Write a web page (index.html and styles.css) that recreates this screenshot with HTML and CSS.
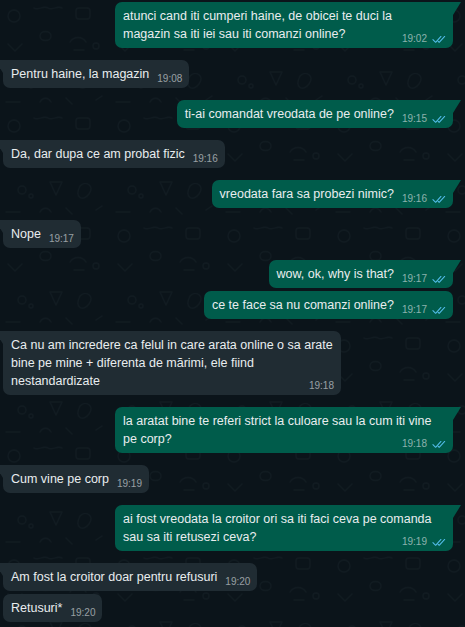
FILE: index.html
```html
<!DOCTYPE html>
<html lang="ro">
<head>
<meta charset="utf-8">
<title>Chat</title>
<link rel="stylesheet" href="styles.css">
</head>
<body>
<div class="chat">
  <div class="row out">
    <div class="bubble wide tail">atunci cand iti cumperi haine, de obicei te duci la<br>magazin sa iti iei sau iti comanzi online?<span class="meta"><span class="time">19:02</span><svg class="ticks" viewBox="0 0 15 9"><path d="M1 4.6 3.9 7.5 9.6 1.2M6.6 6.4 7.7 7.5 13.6 1.2"/></svg></span></div>
  </div>
  <div class="row in">
    <div class="bubble tail">Pentru haine, la magazin<span class="meta"><span class="time">19:08</span></span></div>
  </div>
  <div class="row out">
    <div class="bubble tail">ti-ai comandat vreodata de pe online?<span class="meta"><span class="time">19:15</span><svg class="ticks" viewBox="0 0 15 9"><path d="M1 4.6 3.9 7.5 9.6 1.2M6.6 6.4 7.7 7.5 13.6 1.2"/></svg></span></div>
  </div>
  <div class="row in">
    <div class="bubble tail">Da, dar dupa ce am probat fizic<span class="meta"><span class="time">19:16</span></span></div>
  </div>
  <div class="row out">
    <div class="bubble tail">vreodata fara sa probezi nimic?<span class="meta"><span class="time">19:16</span><svg class="ticks" viewBox="0 0 15 9"><path d="M1 4.6 3.9 7.5 9.6 1.2M6.6 6.4 7.7 7.5 13.6 1.2"/></svg></span></div>
  </div>
  <div class="row in">
    <div class="bubble tail">Nope<span class="meta"><span class="time">19:17</span></span></div>
  </div>
  <div class="row out">
    <div class="bubble tail">wow, ok, why is that?<span class="meta"><span class="time">19:17</span><svg class="ticks" viewBox="0 0 15 9"><path d="M1 4.6 3.9 7.5 9.6 1.2M6.6 6.4 7.7 7.5 13.6 1.2"/></svg></span></div>
  </div>
  <div class="row out cont">
    <div class="bubble">ce te face sa nu comanzi online?<span class="meta"><span class="time">19:17</span><svg class="ticks" viewBox="0 0 15 9"><path d="M1 4.6 3.9 7.5 9.6 1.2M6.6 6.4 7.7 7.5 13.6 1.2"/></svg></span></div>
  </div>
  <div class="row in">
    <div class="bubble wide tail">Ca nu am incredere ca felul in care arata online o sa arate<br>bine pe mine + diferenta de mărimi, ele fiind<br>nestandardizate<span class="meta"><span class="time">19:18</span></span></div>
  </div>
  <div class="row out">
    <div class="bubble wide tail">la aratat bine te referi strict la culoare sau la cum iti vine<br>pe corp?<span class="meta"><span class="time">19:18</span><svg class="ticks" viewBox="0 0 15 9"><path d="M1 4.6 3.9 7.5 9.6 1.2M6.6 6.4 7.7 7.5 13.6 1.2"/></svg></span></div>
  </div>
  <div class="row in">
    <div class="bubble tail">Cum vine pe corp<span class="meta"><span class="time">19:19</span></span></div>
  </div>
  <div class="row out">
    <div class="bubble wide tail">ai fost vreodata la croitor ori sa iti faci ceva pe comanda<br>sau sa iti retusezi ceva?<span class="meta"><span class="time">19:19</span><svg class="ticks" viewBox="0 0 15 9"><path d="M1 4.6 3.9 7.5 9.6 1.2M6.6 6.4 7.7 7.5 13.6 1.2"/></svg></span></div>
  </div>
  <div class="row in">
    <div class="bubble tail">Am fost la croitor doar pentru refusuri<span class="meta"><span class="time">19:20</span></span></div>
  </div>
  <div class="row in cont">
    <div class="bubble">Retusuri*<span class="meta"><span class="time">19:20</span></span></div>
  </div>
</div>
</body>
</html>
```

FILE: styles.css
```css
html, body {
  margin: 0;
  padding: 0;
  height: 100%;
}

body {
  background-color: #0b141a;
  background-image: url("data:image/svg+xml;utf8,<svg xmlns='http://www.w3.org/2000/svg' width='110' height='110' viewBox='0 0 110 110'><g fill='none' stroke='%23111b21' stroke-width='1.3' stroke-linecap='round' stroke-linejoin='round'><circle cx='14' cy='16' r='6'/><path d='M34 8c5 3 9-3 14 0s9-3 14 0'/><rect x='76' y='8' width='14' height='11' rx='3'/><path d='M8 44l7 7 7-7'/><path d='M40 36c0 6 11 6 11 0s-11-6-11 0z'/><path d='M70 42c4-6 12-6 16 0M74 50h10'/><circle cx='96' cy='46' r='3'/><circle cx='22' cy='80' r='4'/><circle cx='31' cy='86' r='2'/><path d='M50 72l6 13 6-13z'/><path d='M80 76c6-6 15 0 9 8s-15 4-9-8'/><path d='M6 102h14M40 102c3-5 8-5 11 0'/><path d='M66 98l6 6M96 100l6-4'/></g></svg>");
  font-family: "Liberation Sans", Arial, sans-serif;
  color: #e9edef;
  overflow: hidden;
}

.chat {
  display: flex;
  flex-direction: column;
  padding: 2px 12px 0 3px;
}

.row {
  display: flex;
  margin-top: 12px;
}

.row:first-child {
  margin-top: 0;
}

.row.cont {
  margin-top: 3px;
}

.row.out {
  justify-content: flex-end;
}

.row.in {
  justify-content: flex-start;
}

.bubble {
  position: relative;
  display: flow-root;
  box-sizing: border-box;
  padding: 5px 7px 5px 8px;
  border-radius: 7px;
  font-size: 12.5px;
  line-height: 18px;
  white-space: nowrap;
}

.bubble.wide {
  width: 338px;
}

.out .bubble {
  background: #005c4b;
}

.in .bubble {
  background: #202c33;
}

.out .bubble.tail {
  border-top-right-radius: 0;
}

.in .bubble.tail {
  border-top-left-radius: 0;
}

.bubble.tail::before {
  content: "";
  position: absolute;
  top: 0;
  width: 8px;
  height: 13px;
}

.out .bubble.tail::before {
  right: -8px;
  background: #005c4b;
  clip-path: polygon(0 0, 100% 0, 0 100%);
}

.in .bubble.tail::before {
  left: -8px;
  background: #202c33;
  clip-path: polygon(0 0, 100% 0, 100% 100%);
}

.meta {
  float: right;
  display: flex;
  align-items: center;
  gap: 5px;
  height: 18px;
  margin-left: 8px;
  position: relative;
  top: 5px;
}

.time {
  font-size: 10px;
  line-height: 10px;
  color: rgba(233, 237, 239, 0.6);
}

.ticks {
  width: 14px;
  height: 9px;
  fill: none;
  stroke: #53bdeb;
  stroke-width: 1.1;
  stroke-linecap: round;
  stroke-linejoin: round;
}
```
